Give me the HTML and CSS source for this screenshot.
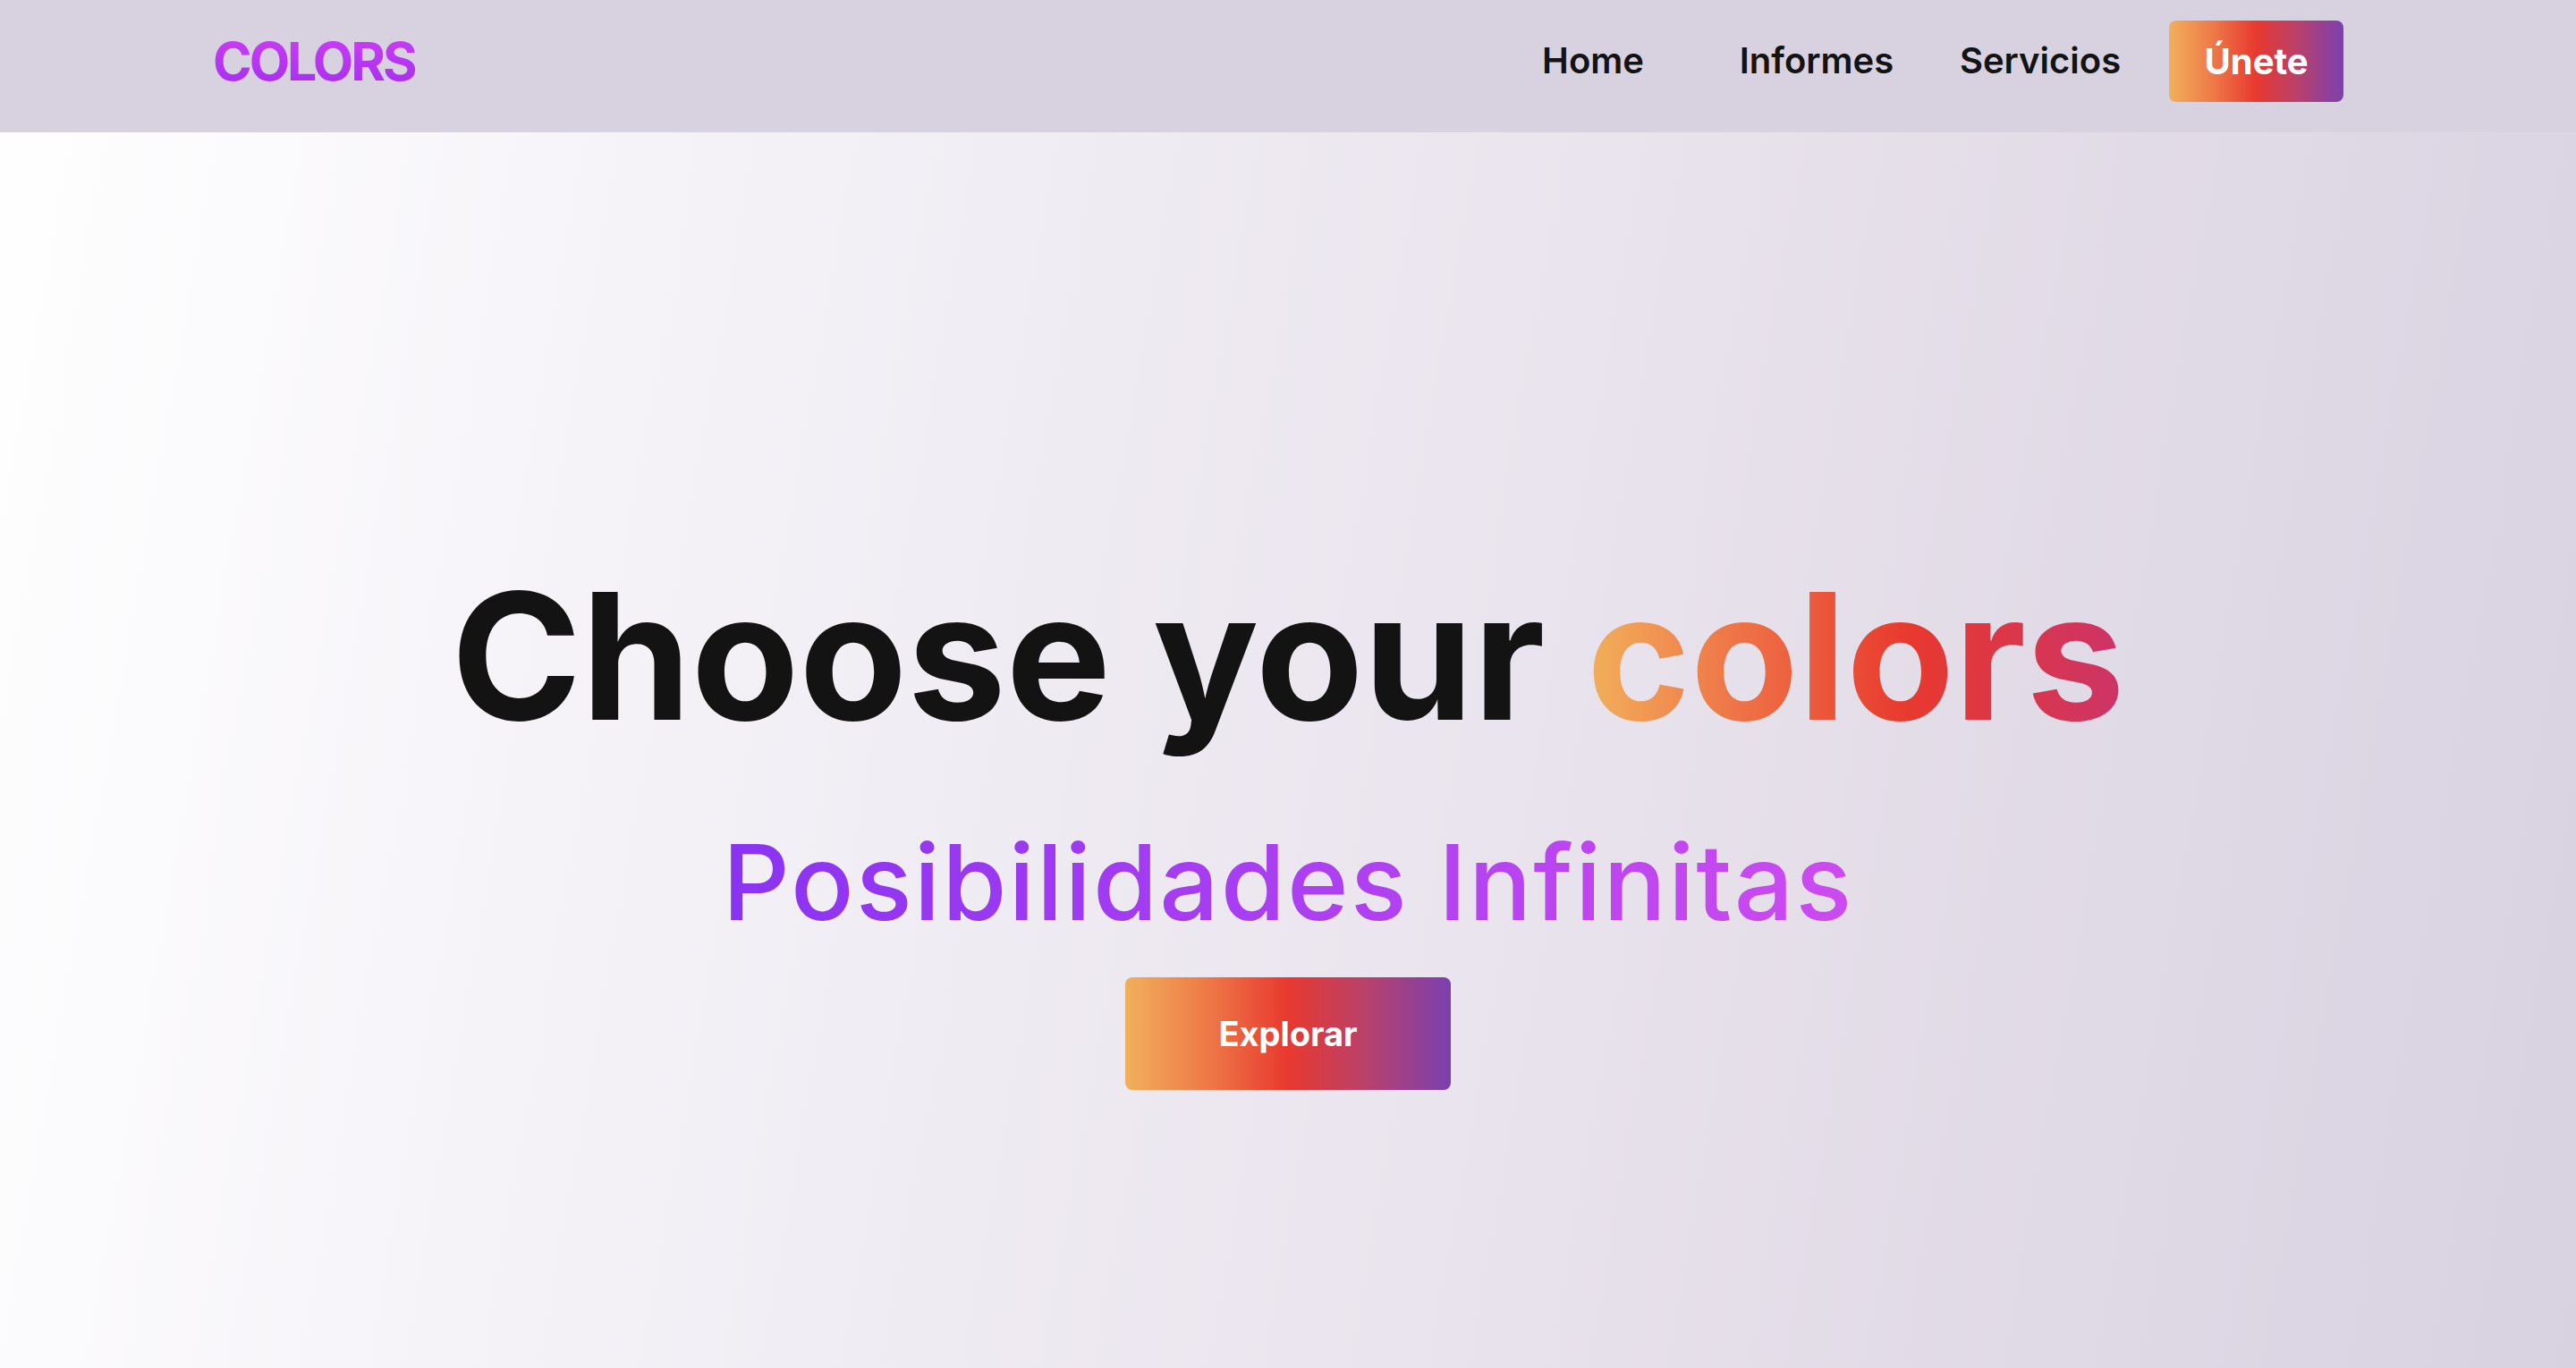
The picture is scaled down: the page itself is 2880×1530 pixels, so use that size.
FILE: index.html
```html
<!DOCTYPE html>
<html lang="es">
<head>
<meta charset="utf-8">
<title>Colors</title>
<link rel="stylesheet" href="styles.css">
</head>
<body>
<header class="topbar">
  <a class="logo" href="#">COLORS</a>
  <nav class="nav">
    <a class="nav-link" href="#">Home</a>
    <a class="nav-link" href="#">Informes</a>
    <a class="nav-link" href="#">Servicios</a>
    <a class="btn btn-join" href="#">Únete</a>
  </nav>
</header>
<main class="hero">
  <h1 class="hero-title">Choose your <span class="hero-accent">colors</span></h1>
  <h2 class="hero-sub">Posibilidades Infinitas</h2>
  <a class="btn btn-explore" href="#">Explorar</a>
</main>
</body>
</html>
```

FILE: styles.css
```css
* { box-sizing: border-box; }
html, body { margin: 0; padding: 0; }
body {
  font-family: Inter, "Noto Sans", sans-serif;
  min-height: 1530px;
  background: linear-gradient(100deg, #ffffff 0%, #f3f0f6 30%, #e8e2ec 62%, #d8d1e0 100%);
  color: #131313;
}
a { text-decoration: none; }

.topbar {
  height: 148px;
  background: #d8d1e0;
  display: flex;
  align-items: center;
  justify-content: space-between;
  padding: 0 260px 12px 238px;
}
.logo {
  font-size: 59px;
  font-weight: 700;
  letter-spacing: -3px;
  line-height: 1;
  background: linear-gradient(180deg, #cc3df6 0%, #a52ff0 100%);
  -webkit-background-clip: text;
  background-clip: text;
  color: transparent;
}
.nav {
  display: flex;
  align-items: center;
}
.nav-link {
  width: 250px;
  text-align: center;
  font-size: 40px;
  font-weight: 600;
  color: #131313;
  line-height: 1;
}
.btn {
  display: flex;
  align-items: center;
  justify-content: center;
  color: #fff;
  font-weight: 700;
  border-radius: 8px;
  background: linear-gradient(90deg, #f1b05b 0%, #ee7a48 25%, #e8392f 50%, #b6416e 75%, #7a40b0 100%);
}
.btn-join {
  width: 195px;
  height: 91px;
  margin-left: 19px;
  font-size: 40px;
}
.hero {
  display: flex;
  flex-direction: column;
  align-items: center;
  padding-top: 487px;
}
.hero-title {
  margin: 0;
  font-size: 197px;
  line-height: 1;
  font-weight: 700;
  letter-spacing: 0;
  color: #131313;
}
.hero-accent {
  background: linear-gradient(90deg, #f2b05a 0%, #ee6f45 30%, #e8392f 60%, #cc3468 100%);
  -webkit-background-clip: text;
  background-clip: text;
  color: transparent;
}
.hero-sub {
  margin: 96px 0 0;
  font-size: 117px;
  line-height: 1;
  font-weight: 500;
  letter-spacing: 2px;
  background: linear-gradient(90deg, #8a33f2 0%, #cc4bf0 100%);
  -webkit-background-clip: text;
  background-clip: text;
  color: transparent;
}
.btn-explore {
  margin-top: 48px;
  width: 364px;
  height: 126px;
  font-size: 38px;
}
```
